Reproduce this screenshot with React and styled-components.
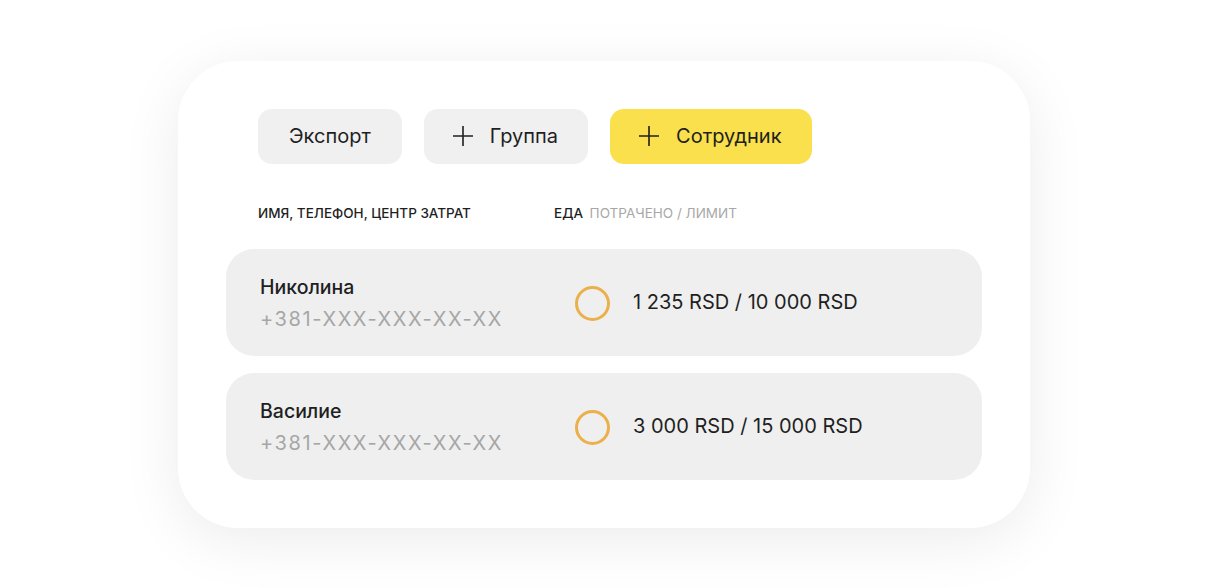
import styled, { createGlobalStyle } from "styled-components";

const GlobalStyle = createGlobalStyle`
  html, body {
    margin: 0;
    padding: 0;
    background: #ffffff;
    font-family: Inter, "Noto Sans", sans-serif;
  }
`;

const employees = [
  { name: "Николина", phone: "+381-XXX-XXX-XX-XX", spent: "1 235 RSD", limit: "10 000 RSD" },
  { name: "Василие", phone: "+381-XXX-XXX-XX-XX", spent: "3 000 RSD", limit: "15 000 RSD" },
];

const Plus = () => (
  <svg width="22" height="22" viewBox="0 0 22 22" fill="none">
    <path d="M11 1v20M1 11h20" stroke="#1f1f1f" strokeWidth="1.6" />
  </svg>
);

const App = () => {
  return (
    <Page>
      <GlobalStyle />
      <Card>
        <Toolbar>
          <Button>Экспорт</Button>
          <Button withIcon>
            <Plus />
            Группа
          </Button>
          <Button withIcon primary>
            <Plus />
            Сотрудник
          </Button>
        </Toolbar>
        <Header>
          <HeadCell>Имя, телефон, центр затрат</HeadCell>
          <HeadCell>
            Еда <Muted>потрачено / лимит</Muted>
          </HeadCell>
        </Header>
        <List>
          {employees.map((e) => (
            <Row key={e.name}>
              <Person>
                <Name>{e.name}</Name>
                <Phone>{e.phone}</Phone>
              </Person>
              <Ring />
              <Amount>
                {e.spent} / {e.limit}
              </Amount>
            </Row>
          ))}
        </List>
      </Card>
    </Page>
  );
};

const Page = styled.div`
  height: 588px;
  display: flex;
  align-items: center;
  justify-content: center;
`;

const Card = styled.div`
  width: 852px;
  height: 467px;
  box-sizing: border-box;
  padding: 48px;
  background: #ffffff;
  border-radius: 60px;
  box-shadow: 0 12px 60px rgba(0, 0, 0, 0.08);
  display: flex;
  flex-direction: column;
`;

const Toolbar = styled.div`
  display: flex;
  gap: 22px;
  padding-left: 32px;
`;

const Button = styled.button`
  height: 55px;
  border: none;
  border-radius: 14px;
  padding: 0 ${(p) => (p.withIcon ? "30px 0 28px" : "31px")};
  display: flex;
  align-items: center;
  gap: 16px;
  font-family: inherit;
  font-size: 20px;
  color: #1f1f1f;
  background: ${(p) => (p.primary ? "#f9e04c" : "#f0f0f0")};
`;

const Header = styled.div`
  display: flex;
  padding-left: 32px;
  margin-top: 41px;
  height: 16px;
  align-items: center;
`;

const HeadCell = styled.div`
  font-size: 13.5px;
  font-weight: 500;
  text-transform: uppercase;
  color: #1f1f1f;
  &:first-child {
    width: 296px;
  }
`;

const Muted = styled.span`
  color: #a8a8a8;
  font-weight: 400;
  margin-left: 3px;
`;

const List = styled.div`
  display: flex;
  flex-direction: column;
  gap: 17px;
  margin-top: 28px;
`;

const Row = styled.div`
  height: 107px;
  box-sizing: border-box;
  padding: 0 34px;
  border-radius: 28px;
  background: #efefef;
  display: flex;
  align-items: center;
`;

const Person = styled.div`
  width: 314px;
  display: flex;
  flex-direction: column;
  gap: 8px;
  padding-top: 2px;
`;

const Name = styled.div`
  font-size: 19.5px;
  font-weight: 500;
  color: #1f1f1f;
`;

const Phone = styled.div`
  font-size: 20px;
  color: #a6a6a6;
  letter-spacing: 1.6px;
`;

const Ring = styled.div`
  width: 29px;
  height: 29px;
  border-radius: 50%;
  border: 3.5px solid #ebb04b;
  margin-left: 1px;
  margin-right: 23px;
  margin-top: 2px;
`;

const Amount = styled.div`
  font-size: 20px;
  color: #1f1f1f;
`;

export default App;
